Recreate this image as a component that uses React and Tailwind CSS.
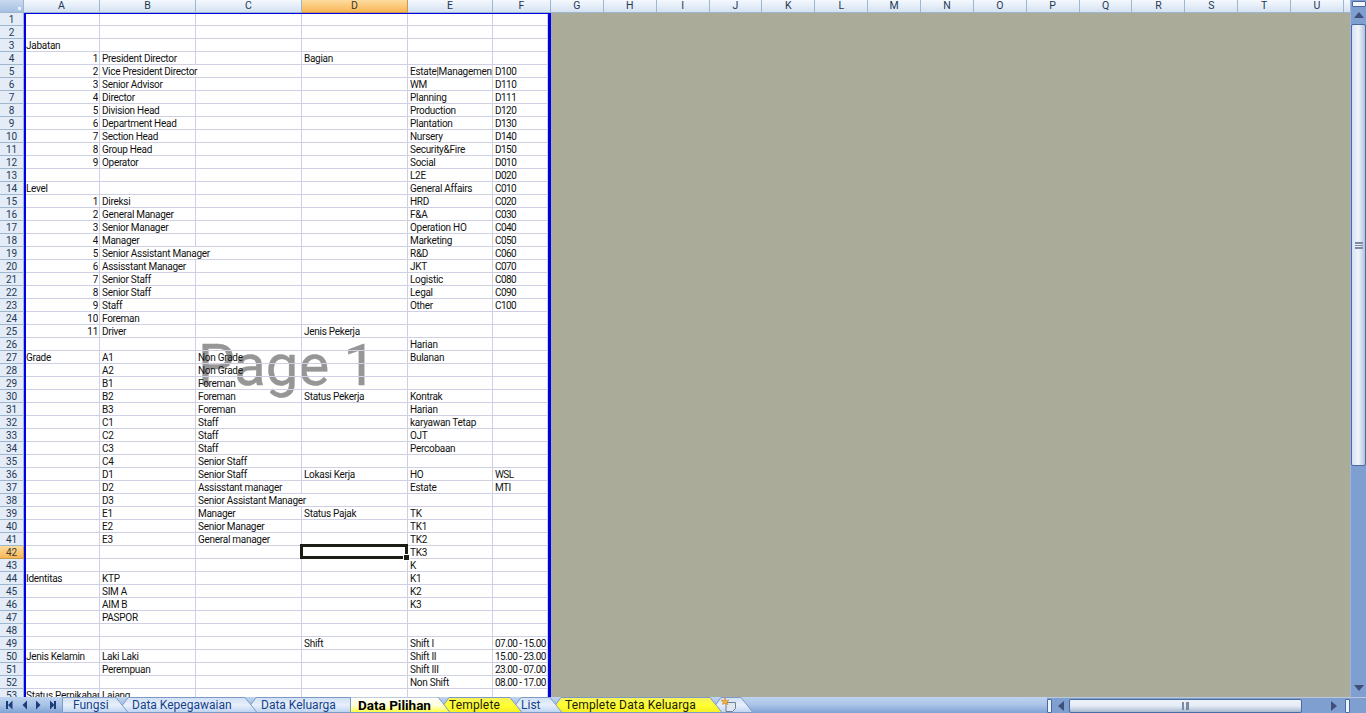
const DATA = {
  3: { A: "Jabatan" },
  4: { N: "1", B: "President Director", D: "Bagian" },
  5: { N: "2", B: "Vice President Director", span: "B", E: "Estate|Management", F: "D100" },
  6: { N: "3", B: "Senior Advisor", E: "WM", F: "D110" },
  7: { N: "4", B: "Director", E: "Planning", F: "D111" },
  8: { N: "5", B: "Division Head", E: "Production", F: "D120" },
  9: { N: "6", B: "Department Head", E: "Plantation", F: "D130" },
  10: { N: "7", B: "Section Head", E: "Nursery", F: "D140" },
  11: { N: "8", B: "Group Head", E: "Security&Fire", F: "D150" },
  12: { N: "9", B: "Operator", E: "Social", F: "D010" },
  13: { E: "L2E", F: "D020" },
  14: { A: "Level", E: "General Affairs", F: "C010" },
  15: { N: "1", B: "Direksi", E: "HRD", F: "C020" },
  16: { N: "2", B: "General Manager", E: "F&A", F: "C030" },
  17: { N: "3", B: "Senior Manager", E: "Operation HO", F: "C040" },
  18: { N: "4", B: "Manager", E: "Marketing", F: "C050" },
  19: { N: "5", B: "Senior Assistant Manager", span: "B", E: "R&D", F: "C060" },
  20: { N: "6", B: "Assisstant Manager", E: "JKT", F: "C070" },
  21: { N: "7", B: "Senior Staff", E: "Logistic", F: "C080" },
  22: { N: "8", B: "Senior Staff", E: "Legal", F: "C090" },
  23: { N: "9", B: "Staff", E: "Other", F: "C100" },
  24: { N: "10", B: "Foreman" },
  25: { N: "11", B: "Driver", D: "Jenis Pekerja" },
  26: { E: "Harian" },
  27: { A: "Grade", B: "A1", C: "Non Grade", E: "Bulanan" },
  28: { B: "A2", C: "Non Grade" },
  29: { B: "B1", C: "Foreman" },
  30: { B: "B2", C: "Foreman", D: "Status Pekerja", E: "Kontrak" },
  31: { B: "B3", C: "Foreman", E: "Harian" },
  32: { B: "C1", C: "Staff", E: "karyawan Tetap" },
  33: { B: "C2", C: "Staff", E: "OJT" },
  34: { B: "C3", C: "Staff", E: "Percobaan" },
  35: { B: "C4", C: "Senior Staff" },
  36: { B: "D1", C: "Senior Staff", D: "Lokasi Kerja", E: "HO", F: "WSL" },
  37: { B: "D2", C: "Assisstant manager", E: "Estate", F: "MTI" },
  38: { B: "D3", C: "Senior Assistant Manager", span: "C" },
  39: { B: "E1", C: "Manager", D: "Status Pajak", E: "TK" },
  40: { B: "E2", C: "Senior Manager", E: "TK1" },
  41: { B: "E3", C: "General manager", E: "TK2" },
  42: { E: "TK3" },
  43: { E: "K" },
  44: { A: "Identitas", B: "KTP", E: "K1" },
  45: { B: "SIM A", E: "K2" },
  46: { B: "AIM B", E: "K3" },
  47: { B: "PASPOR" },
  48: {},
  49: { D: "Shift", E: "Shift I", F: "07.00 - 15.00" },
  50: { A: "Jenis Kelamin", B: "Laki Laki", E: "Shift II", F: "15.00 - 23.00" },
  51: { B: "Perempuan", E: "Shift III", F: "23.00 - 07.00" },
  52: { E: "Non Shift", F: "08.00 - 17.00" },
  53: { A: "Status Pernikahan", B: "Lajang" },
};

const ROW_NUMS = Array.from({ length: 53 }, (_, i) => i + 1);
const FAR_COLS = ["G", "H", "I", "J", "K", "L", "M", "N", "O", "P", "Q", "R", "S", "T", "U"];

function HeadCell({ w, children, active }) {
  return (
    <div
      className={`${w} h-[13px] shrink-0 flex items-center justify-center border-r border-b text-[10.5px] leading-none ${
        active
          ? "bg-gradient-to-b from-[#fddc9e] to-[#f8b654] border-[#c89a4e] text-[#3b3b2e]"
          : "bg-gradient-to-b from-[#f5f9fe] to-[#d5e2f2] border-[#9eb6ce] text-[#1f3a55]"
      }`}
    >
      {children}
    </div>
  );
}

function Cell({ w, children, right, selected, tight }) {
  return (
    <div
      className={`${w} relative h-[13px] shrink-0 border-r border-b border-[#d0d0e5] text-[10px] leading-[14px] whitespace-nowrap ${
        right ? "text-right pr-px" : "pl-0.5"
      } ${tight ? "tracking-[-0.55px]" : "tracking-[-0.28px]"}`}
    >
      <span className="block overflow-hidden h-[13px]">{children}</span>
      {selected && (
        <div className="absolute left-[-2px] top-[-2px] w-[108px] h-[15px] border-[3px] border-[#1c1c14] z-20">
          <div className="absolute right-[-5px] bottom-[-5px] w-[5px] h-[5px] bg-[#1c1c14] border border-white box-content" />
        </div>
      )}
    </div>
  );
}

function Row({ n }) {
  const r = DATA[n] || {};
  const bSpan = r.span === "B";
  const cSpan = r.span === "C";
  return (
    <div className="flex h-[13px]">
      <div
        className={`w-[24px] shrink-0 h-[13px] pt-px flex items-center justify-center border-r border-b text-[10px] leading-none ${
          n === 42
            ? "bg-gradient-to-b from-[#fddc9e] to-[#f8b654] border-[#c89a4e] text-[#3b3b2e]"
            : "bg-[#e4ecf7] border-[#9eb6ce] text-[#1f3a55]"
        }`}
      >
        {n}
      </div>
      <Cell w="w-[76px]" right={!!r.N}>{r.N || r.A}</Cell>
      {bSpan ? (
        <Cell w="w-[202px]">{r.B}</Cell>
      ) : (
        <>
          <Cell w="w-[96px]">{r.B}</Cell>
          {cSpan ? null : <Cell w="w-[106px]">{r.C}</Cell>}
        </>
      )}
      {cSpan ? (
        <Cell w="w-[212px]">{r.C}</Cell>
      ) : (
        <Cell w="w-[106px]" selected={n === 42}>{r.D}</Cell>
      )}
      <Cell w="w-[85px]">{r.E}</Cell>
      <Cell w="w-[55px]" tight>{r.F}</Cell>
    </div>
  );
}

function TabShape({ w, fill, stroke, id, straight }) {
  const start = straight ? `M0.5 15.5 L0.5 0.5` : `M0 15.5 L11 0.5`;
  return (
    <svg className="absolute left-0 top-0" width={w} height="16" viewBox={`0 0 ${w} 16`}>
      <defs>
        <linearGradient id={id} x1="0" y1="0" x2="0" y2="1">
          {fill.map((c, i) => (
            <stop key={i} offset={i / (fill.length - 1)} stopColor={c} />
          ))}
        </linearGradient>
      </defs>
      <path
        d={`${start} L${w - 13} 0.5 L${w - 1} 15.5 Z`}
        fill={`url(#${id})`}
        stroke={stroke}
        strokeWidth="1"
      />
    </svg>
  );
}

const BLUE = ["#cfdff5", "#e8f0fb", "#bcd2ef"];
const YEL = ["#f4f060", "#ffff33", "#f5ee22"];

const TABS = [
  { label: "Fungsi", left: 62, w: 67, textLeft: 11, fill: BLUE, color: "text-[#15428b]", straight: true },
  { label: "Data Kepegawaian", left: 117, w: 141, textLeft: 15, fill: BLUE, color: "text-[#15428b]" },
  { label: "Data Keluarga", left: 245, w: 118, textLeft: 16, fill: BLUE, color: "text-[#15428b]" },
  { label: "Templete", left: 438, w: 85, textLeft: 11, fill: YEL, color: "text-[#20200a] tracking-[0.15px]" },
  { label: "List", left: 510, w: 53, textLeft: 11, fill: BLUE, color: "text-[#15428b]" },
  { label: "Templete Data Keluarga", left: 550, w: 173, textLeft: 15, fill: YEL, color: "text-[#20200a] tracking-[0.15px]" },
  { label: "", left: 710, w: 44, textLeft: 0, fill: BLUE, color: "" },
];

function NavArrows() {
  const c = "#1b3e7a";
  return (
    <svg width="60" height="16" viewBox="0 0 60 16" className="shrink-0">
      <path d="M6 4h2v8H6zM12.500 3.500L8 8l4.500 4.500z" fill={c} />
      <path d="M27 3.500L22.500 8l4.500 4.500z" fill={c} />
      <path d="M36 3.500L40.500 8 36 12.500z" fill={c} />
      <path d="M50 3.500L54.500 8 50 12.500zM54 4h2v8h-2z" fill={c} />
    </svg>
  );
}

function NewSheetIcon() {
  return (
    <svg width="16" height="14" viewBox="0 0 16 14" className="absolute left-[11px] top-px">
      <path d="M5 4.500h9.500v6l-3 3H5z" fill="#dfe6ef" stroke="#6e7f96" />
      <path d="M4 0l1 2.500L8 2 6 4l1 2.500L4 5.500 1.500 6.500 2 4 0 2l3 .5z" fill="#f3b23c" stroke="#c97d1a" strokeWidth=".5" />
    </svg>
  );
}

function Tabs() {
  return (
    <div className="relative w-[1047px] h-[16px] shrink-0 bg-gradient-to-b from-[#bed3ef] via-[#a9c3e7] to-[#7fa2d4] overflow-hidden">
      <NavArrows />
      {TABS.map((t, i) => (
        <div
          key={i}
          style={{ left: t.left, width: t.w, zIndex: 20 - i }}
          className="absolute top-0 h-[16px]"
        >
          <TabShape w={t.w} fill={t.fill} stroke="#7d9ac5" id={`tab${i}`} straight={t.straight} />
          {t.label && (
            <span
              style={{ left: t.textLeft }}
              className={`absolute top-0 text-[12px] leading-[16px] whitespace-nowrap ${t.color}`}
            >
              {t.label}
            </span>
          )}
          {!t.label && <NewSheetIcon />}
        </div>
      ))}
      <div className="absolute left-[350px] top-0 w-[101px] h-[16px] z-30">
        <svg className="absolute left-0 top-0" width="101" height="16" viewBox="0 0 101 16">
          <defs>
            <linearGradient id="act" x1="0" y1="0" x2="0" y2="1">
              <stop offset="0" stopColor="#ffffff" />
              <stop offset="0.55" stopColor="#ffffd8" />
              <stop offset="1" stopColor="#ffff33" />
            </linearGradient>
          </defs>
          <path d="M0.500 15.500 L0.500 0 L88 0 L100 15.500 Z" fill="url(#act)" stroke="#7d9ac5" />
        </svg>
        <span className="absolute left-[8px] top-0 text-[13.500px] leading-[16px] font-bold text-black whitespace-nowrap">
          Data Pilihan
        </span>
      </div>
    </div>
  );
}

function Splitter({ v }) {
  return v ? (
    <div className="w-[14px] h-[6px] mx-auto mt-px bg-white/90 border border-[#4a6a9f] rounded-[1px]" />
  ) : (
    <div className="w-[5px] h-[14px] my-auto bg-[#eef4fc] border border-[#4a6a9f] rounded-[1px] shrink-0" />
  );
}

function VScroll() {
  return (
    <div className="w-[16px] shrink-0 flex flex-col items-center bg-[#7f9fd0] border-l border-[#9db6da]">
      <Splitter v />
      <svg width="10" height="6" viewBox="0 0 10 6" className="mt-[5px] shrink-0">
        <path d="M5 0l5 6H0z" fill="#3f4f78" />
      </svg>
      <div className="mt-[6px] w-[15px] h-[442px] shrink-0 flex items-center justify-center border border-[#4d6ba3] rounded-[2px] bg-gradient-to-r from-[#d7e2f2] via-[#f0f4fa] to-[#b3c2da]">
        <div className="w-[8px] h-[7px] border-y-2 border-[#7b8aa5] relative">
          <div className="absolute left-0 right-0 top-[1.500px] h-px bg-[#7b8aa5]" />
        </div>
      </div>
      <div className="flex-1" />
      <svg width="10" height="6" viewBox="0 0 10 6" className="mb-[6px] shrink-0">
        <path d="M0 0h10L5 6z" fill="#3f4f78" />
      </svg>
    </div>
  );
}

function HScroll() {
  return (
    <div className="flex-1 h-[16px] flex items-center bg-[#7f9fd0] border-t border-[#b9c8dc] pl-0">
      <Splitter />
      <svg width="6" height="10" viewBox="0 0 6 10" className="ml-[6px] shrink-0">
        <path d="M6 0v10L0 5z" fill="#3f4f78" />
      </svg>
      <div className="ml-[5px] w-[233px] h-[14px] shrink-0 flex items-center justify-center border border-[#4d6ba3] rounded-[2px] bg-gradient-to-b from-[#eef3fa] via-[#e4ebf5] to-[#a9b8cf]">
        <div className="w-[7px] h-[8px] border-x-2 border-[#7b8aa5] relative">
          <div className="absolute top-0 bottom-0 left-[1.500px] w-px bg-[#7b8aa5]" />
        </div>
      </div>
      <div className="flex-1" />
      <svg width="6" height="10" viewBox="0 0 6 10" className="mr-[8px] shrink-0">
        <path d="M0 0v10l6-5z" fill="#3f4f78" />
      </svg>
      <Splitter />
      <div className="w-[16px] shrink-0" />
    </div>
  );
}

export default function App() {
  return (
    <div className="w-[1366px] h-[713px] flex flex-col overflow-hidden bg-[#7f9fd0] text-[#111] font-['Roboto','Liberation_Sans',Arial,sans-serif]">
      <div className="flex flex-1 min-h-0">
        <div className="w-[1350px] shrink-0 flex flex-col min-h-0">
          <div className="flex h-[13px] shrink-0">
            <div className="w-[24px] h-[13px] shrink-0 relative bg-gradient-to-b from-[#c9daf0] to-[#a6c0e2] border-r border-b border-[#9eb6ce]">
              <div className="absolute right-[2px] bottom-[2px] w-[3px] h-[3px] bg-[#eaf1fa]" />
            </div>
            <HeadCell w="w-[76px]">A</HeadCell>
            <HeadCell w="w-[96px]">B</HeadCell>
            <HeadCell w="w-[106px]">C</HeadCell>
            <HeadCell w="w-[106px]" active>D</HeadCell>
            <HeadCell w="w-[85px]">E</HeadCell>
            <HeadCell w="w-[58px]">F</HeadCell>
            <div className="flex w-[793px] shrink-0">
              {FAR_COLS.map((c) => (
                <div
                  key={c}
                  className="flex-1 h-[13px] flex items-center justify-center border-r border-b border-[#9eb6ce] bg-gradient-to-b from-[#f5f9fe] to-[#d5e2f2] text-[10.5px] leading-none text-[#1f3a55]"
                >
                  {c}
                </div>
              ))}
            </div>
            <div className="flex-1 h-[13px] border-b border-[#9eb6ce] bg-gradient-to-b from-[#f5f9fe] to-[#d5e2f2]" />
          </div>
          <div className="flex flex-1 min-h-0">
            <div className="w-[551px] shrink-0 relative bg-white overflow-hidden">
              <div className="absolute left-[198px] top-[316px] text-[58px] leading-[72px] text-[#969696] whitespace-nowrap [-webkit-text-stroke:0.4px_#969696]">
                Page 1
              </div>
              <div className="relative">
                {ROW_NUMS.map((n) => (
                  <Row key={n} n={n} />
                ))}
              </div>
              <div className="absolute left-[24px] right-0 top-0 bottom-0 border-l-2 border-t border-r-[3px] border-[#0000e6] pointer-events-none z-10" />
            </div>
            <div className="flex-1 bg-[#abab9a]" />
          </div>
        </div>
        <VScroll />
      </div>
      <div className="flex h-[16px] shrink-0">
        <Tabs />
        <HScroll />
      </div>
    </div>
  );
}
